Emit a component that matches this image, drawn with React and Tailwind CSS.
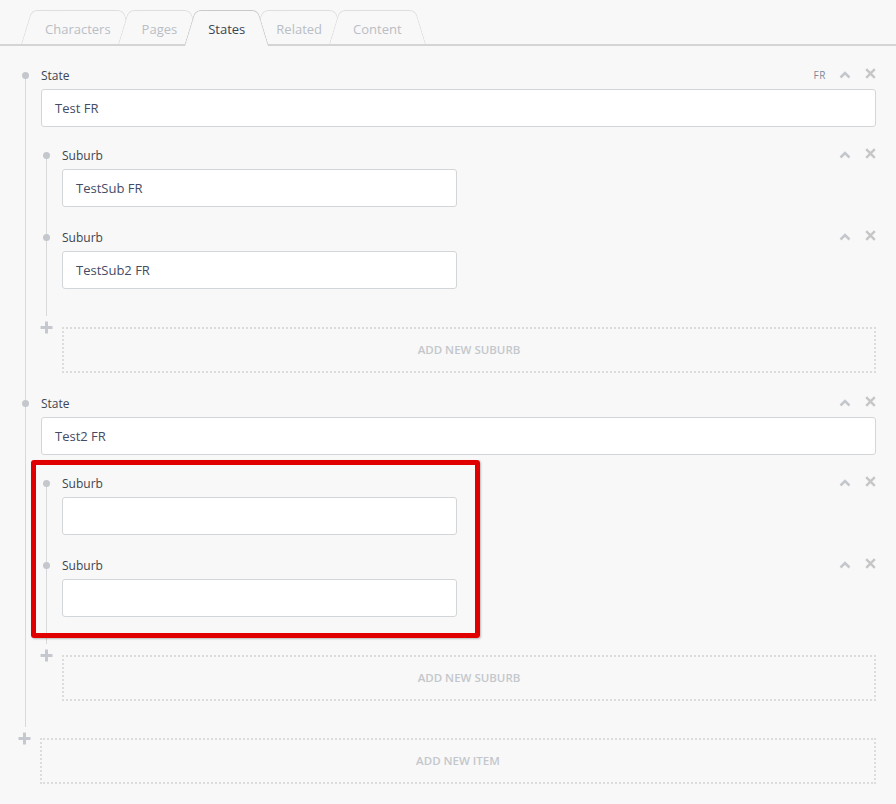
import React from "react";

const tabs = ["Characters", "Pages", "States", "Related", "Content"];

function Tab({ label, active, first, idx }) {
  const border = active ? "border-[#c9c9c9]" : "border-[#dedede]";
  return (
    <div
      className={`relative flex items-center justify-center px-[24px] ${
        first ? "" : "-ml-[17px]"
      } ${active ? "h-[36px] -mb-[2px] pb-[2px]" : "h-[34px]"}`}
      style={{ zIndex: active ? 20 : idx + 1 }}
    >
      <div
        className={`absolute left-0 top-0 bottom-0 w-[60%] origin-bottom skew-x-[-17deg] border-t border-l ${border} rounded-tl-[6px] bg-[#f8f8f8]`}
      />
      <div
        className={`absolute right-0 top-0 bottom-0 w-[60%] origin-bottom skew-x-[17deg] border-t border-r ${border} rounded-tr-[6px] bg-[#f8f8f8]`}
      />
      <span
        className={`relative text-[13px] leading-none pt-[5px] ${
          active ? "text-[#3a4553]" : "text-[#b9bec6]"
        }`}
      >
        {label}
      </span>
    </div>
  );
}

function Chevron() {
  return (
    <svg width="12" height="9" viewBox="0 0 12 9" className="block">
      <path d="M1.5 7.5 L6 3 L10.5 7.5" fill="none" stroke="#c4c8cd" strokeWidth="2.6" />
    </svg>
  );
}

function Cross() {
  return (
    <svg width="11" height="11" viewBox="0 0 11 11" className="block">
      <path d="M1.2 1.2 L9.8 9.8 M9.8 1.2 L1.2 9.8" fill="none" stroke="#c6c6c6" strokeWidth="2.4" />
    </svg>
  );
}

function Controls({ fr }) {
  return (
    <div className="flex items-center">
      {fr && (
        <span className="mr-[13px] text-[10px] leading-none tracking-[0.6px] text-[#7a8a9c]">FR</span>
      )}
      <span className="mr-[14px] -mt-[1px]">
        <Chevron />
      </span>
      <span className="-mt-[3px]">
        <Cross />
      </span>
    </div>
  );
}

function Item({ label, value, narrow, fr, first, children, gapClass }) {
  return (
    <div className={`relative pl-[15px] ${first ? "-mt-[8px]" : gapClass}`}>
      <span className="absolute left-[-4px] top-[5px] w-[7px] h-[7px] rounded-full bg-[#c4c7cb]" />
      <div className="flex items-center justify-between h-[16px]">
        <span className="text-[12px] leading-none pt-[2px] text-[#3d4550]">{label}</span>
        <Controls fr={fr} />
      </div>
      <div
        className={`mt-[6px] h-[38px] ${
          narrow ? "w-[395px]" : "w-full"
        } flex items-center rounded-[3px] border border-[#d3d6d8] bg-white px-[13px] pt-[2px] text-[13px] text-[#434c66]`}
      >
        {value}
      </div>
      {children}
    </div>
  );
}

function Plus() {
  return (
    <svg width="13" height="13" viewBox="0 0 13 13" className="block">
      <path d="M6.5 0.5 V12.5 M0.5 6.5 H12.5" stroke="#c5c9cf" strokeWidth="3" />
    </svg>
  );
}

function AddRow({ text, className }) {
  return (
    <div className={`flex items-start ${className}`}>
      <span className="-mt-[6px] mr-[9px]">
        <Plus />
      </span>
      <div className="flex-1 h-[46px] flex items-center justify-center border-2 border-dotted border-[#dcdcdc] text-[11.5px] font-semibold text-[#c3c7cc]">
        {text}
      </div>
    </div>
  );
}

function SuburbList({ items }) {
  return (
    <div className="mt-[28px] ml-[5px]">
      <div className="flex flex-col border-l border-[#d9d9d9] pb-[27px]">
        {items.map((v, i) => (
          <Item key={i} label="Suburb" value={v} narrow first={i === 0} gapClass="mt-[22px]" />
        ))}
      </div>
      <AddRow text="ADD NEW SUBURB" className="mt-[11px] -ml-[6px]" />
    </div>
  );
}

export default function App() {
  return (
    <div className="relative w-[896px] min-h-[804px] bg-[#f8f8f8] font-['Open_Sans',sans-serif]">
      <div className="flex items-end h-[46px] pl-[21px] border-b-2 border-[#d4d4d4]">
        {tabs.map((t, i) => (
          <Tab key={t} label={t} active={t === "States"} first={i === 0} idx={i} />
        ))}
      </div>

      <div className="pl-[25px] pr-[20px]">
        <div className="mt-[29px] flex flex-col border-l border-[#d9d9d9] pb-[26px]">
          <Item label="State" value="Test FR" fr first>
            <SuburbList items={["TestSub FR", "TestSub2 FR"]} />
          </Item>
          <Item label="State" value="Test2 FR" gapClass="mt-[22px]">
            <SuburbList items={["", ""]} />
          </Item>
        </div>
        <AddRow text="ADD NEW ITEM" className="mt-[11px] -ml-[7px]" />
      </div>

      <div className="absolute left-[31px] top-[460px] w-[449px] h-[178px] rounded-[3px] border-[5px] border-[#e00000] shadow-[1px_1px_2px_rgba(0,0,0,0.25)]" />
    </div>
  );
}
